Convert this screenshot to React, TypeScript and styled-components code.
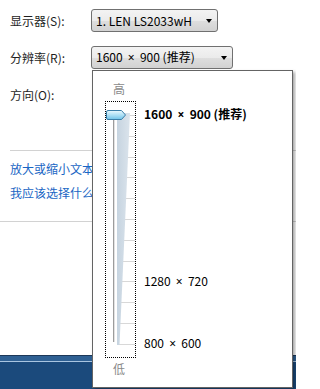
import React from "react";
import styled, { createGlobalStyle } from "styled-components";

const GlobalStyle = createGlobalStyle`
  html, body { margin: 0; padding: 0; background: #fff; }
  body {
    font-family: "Noto Sans CJK SC", "Microsoft YaHei", sans-serif;
    font-size: 12px;
    color: #1e1e1e;
  }
`;

const Page = styled.div`
  position: relative;
  width: 296px;
  height: 389px;
  overflow: hidden;
  display: flex;
  flex-direction: column;
  background: #fff;
`;

const Window = styled.div`
  height: 355px;
  box-sizing: border-box;
  padding-top: 9px;
  display: flex;
  flex-direction: column;
  background: #fff;
`;

const Row = styled.div`
  display: flex;
  align-items: center;
  height: 23px;
  padding-left: 10px;
  margin-bottom: 14px;
`;

const Label = styled.span`
  width: 81px;
  line-height: 16px;
  white-space: nowrap;
  color: #1e1e1e;
`;

const Combo = styled.div<{ $w: number }>`
  width: ${(p) => p.$w}px;
  height: 23px;
  box-sizing: border-box;
  border: 1px solid #707070;
  border-radius: 3px;
  background: linear-gradient(#f3f3f3 0%, #ebebeb 50%, #dedede 52%, #d2d2d2 100%);
  display: flex;
  align-items: center;
  justify-content: space-between;
  padding: 0 5px 0 4px;
  color: #000;
  line-height: 16px;
  white-space: nowrap;
`;

const Arrow = styled.span`
  width: 0;
  height: 0;
  border-left: 3.5px solid transparent;
  border-right: 3.5px solid transparent;
  border-top: 4px solid #000;
`;

const Times = styled.span`
  font-family: "Noto Sans", "DejaVu Sans", sans-serif;
  font-weight: inherit;
  font-size: 12px;
  margin: 0 2.5px;
`;

const Rule = styled.div<{ $inset: number; $top: number }>`
  height: 1px;
  background: #d2d2d2;
  margin-left: ${(p) => p.$inset}px;
  margin-top: ${(p) => p.$top}px;
`;

const Links = styled.div`
  display: flex;
  flex-direction: column;
  gap: 8px;
  padding: 10px 0 0 10px;
`;

const Link = styled.span`
  color: #1a66c4;
  line-height: 16px;
  white-space: nowrap;
`;

const Desktop = styled.div`
  flex: 1;
  background: linear-gradient(
    #1d3858 0 1px,
    #2f6093 1px 6px,
    #a9c5e1 6px 7px,
    #1b4a7c 7px
  );
`;

const Popup = styled.div`
  position: absolute;
  left: 92px;
  top: 70px;
  width: 201px;
  height: 318px;
  box-sizing: border-box;
  border: 1px solid #646464;
  background: #fff;
  box-shadow: 2px 2px 3px rgba(0, 0, 0, 0.35);
  display: flex;
  padding: 10px 0 0 12px;
`;

const SliderCol = styled.div`
  display: flex;
  flex-direction: column;
  align-items: flex-start;
`;

const Cap = styled.span<{ $gap: number }>`
  padding-left: 8px;
  line-height: 16px;
  color: #8a8a8a;
  margin-top: ${(p) => p.$gap}px;
`;

const SliderBox = styled.div`
  margin-top: 4px;
  width: 31px;
  height: 257px;
  box-sizing: border-box;
  border: 1px dotted #000;
  display: flex;
`;

const Stops = styled.div`
  margin-left: 8px;
  margin-top: 23.5px;
  display: grid;
  grid-template-rows: repeat(12, 20.8px);
  align-items: center;
`;

const Stop = styled.span<{ $row: number; $bold?: boolean }>`
  grid-row: ${(p) => p.$row + 1};
  font-weight: ${(p) => (p.$bold ? 700 : 400)};
  color: #000;
  line-height: 16px;
  white-space: nowrap;
`;

const ticks = Array.from({ length: 12 }, (_, i) => 13 + 20.8 * i);

function SliderArt() {
  return (
    <svg width="29" height="255" viewBox="0 0 29 255">
      <defs>
        <linearGradient id="wedge" x1="0" x2="1" y1="0" y2="0">
          <stop offset="0" stopColor="#c6d4e0" />
          <stop offset="1" stopColor="#dbe4ec" />
        </linearGradient>
        <linearGradient id="thumb" x1="0" x2="0" y1="0" y2="1">
          <stop offset="0" stopColor="#eaf8fe" />
          <stop offset="0.5" stopColor="#aee0f5" />
          <stop offset="1" stopColor="#6fc2e8" />
        </linearGradient>
      </defs>
      {ticks.map((y) => (
        <line key={y} x1="11" x2="29" y1={Math.round(y) + 0.5} y2={Math.round(y) + 0.5} stroke="#d8d8d8" strokeWidth="1" />
      ))}
      <polygon points="11,11 24,11 13.5,243 11,243" fill="url(#wedge)" />
      <line x1="7.5" x2="7.5" y1="17" y2="240" stroke="#9c9c9c" strokeWidth="1" />
      <line x1="8.5" x2="8.5" y1="17" y2="240" stroke="#e2e2e2" strokeWidth="1" />
      <path
        d="M2,8.5 H15.5 L19.5,13 L15.5,17.5 H2 Q0.5,17.5 0.5,16 V10 Q0.5,8.5 2,8.5 Z"
        fill="url(#thumb)"
        stroke="#3b7ea8"
        strokeWidth="1"
      />
    </svg>
  );
}

export default function App() {
  return (
    <>
      <GlobalStyle />
      <Page>
        <Window>
          <Row>
            <Label>显示器(S):</Label>
            <Combo $w={127}>
              <span>1. LEN LS2033wH</span>
              <Arrow />
            </Combo>
          </Row>
          <Row>
            <Label>分辨率(R):</Label>
            <Combo $w={142}>
              <span>
                1600 <Times>×</Times> 900 (推荐)
              </span>
              <Arrow />
            </Combo>
          </Row>
          <Row>
            <Label>方向(O):</Label>
          </Row>
          <Rule $inset={10} $top={30} />
          <Links>
            <Link>放大或缩小文本和其他项目</Link>
            <Link>我应该选择什么显示器设置?</Link>
          </Links>
          <Rule $inset={0} $top={20} />
        </Window>
        <Desktop />
        <Popup>
          <SliderCol>
            <Cap $gap={0}>高</Cap>
            <SliderBox>
              <SliderArt />
            </SliderBox>
            <Cap $gap={3}>低</Cap>
          </SliderCol>
          <Stops>
            <Stop $row={0} $bold>
              1600 <Times>×</Times> 900 (推荐)
            </Stop>
            <Stop $row={8}>
              1280 <Times>×</Times> 720
            </Stop>
            <Stop $row={11}>
              800 <Times>×</Times> 600
            </Stop>
          </Stops>
        </Popup>
      </Page>
    </>
  );
}
